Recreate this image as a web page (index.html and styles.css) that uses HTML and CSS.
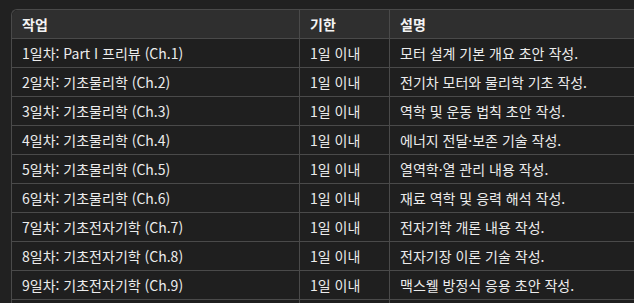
FILE: index.html
```html
<!DOCTYPE html>
<html lang="ko">
<head>
<meta charset="utf-8">
<link rel="stylesheet" href="styles.css">
</head>
<body>
<div class="wrap">
<table class="tbl">
<thead>
<tr><th class="c1">작업</th><th class="c2">기한</th><th class="c3">설명</th></tr>
</thead>
<tbody>
<tr><td>1일차: Part I 프리뷰 (Ch.1)</td><td>1일 이내</td><td>모터 설계 기본 개요 초안 작성.</td></tr>
<tr><td>2일차: 기초물리학 (Ch.2)</td><td>1일 이내</td><td>전기차 모터와 물리학 기초 작성.</td></tr>
<tr><td>3일차: 기초물리학 (Ch.3)</td><td>1일 이내</td><td>역학 및 운동 법칙 초안 작성.</td></tr>
<tr><td>4일차: 기초물리학 (Ch.4)</td><td>1일 이내</td><td>에너지 전달·보존 기술 작성.</td></tr>
<tr><td>5일차: 기초물리학 (Ch.5)</td><td>1일 이내</td><td>열역학·열 관리 내용 작성.</td></tr>
<tr><td>6일차: 기초물리학 (Ch.6)</td><td>1일 이내</td><td>재료 역학 및 응력 해석 작성.</td></tr>
<tr><td>7일차: 기초전자기학 (Ch.7)</td><td>1일 이내</td><td>전자기학 개론 내용 작성.</td></tr>
<tr><td>8일차: 기초전자기학 (Ch.8)</td><td>1일 이내</td><td>전자기장 이론 기술 작성.</td></tr>
<tr><td>9일차: 기초전자기학 (Ch.9)</td><td>1일 이내</td><td>맥스웰 방정식 응용 초안 작성.</td></tr>
<tr class="tail"><td></td><td></td><td></td></tr>
</tbody>
</table>
</div>
</body>
</html>
```
FILE: styles.css
```css
html, body {
  margin: 0;
  padding: 0;
  background: #212121;
  overflow: hidden;
}
body {
  width: 634px;
  height: 303px;
  font-family: "Noto Sans CJK KR", "Noto Sans", sans-serif;
  font-size: 14px;
  color: #ececec;
}
.wrap {
  padding: 9px 0 0 11px;
}
.tbl {
  border-collapse: separate;
  border-spacing: 0;
  width: 700px;
  table-layout: fixed;
  border-top: 1px solid #4a4a4a;
  border-left: 1px solid #4a4a4a;
  border-top-left-radius: 6px;
  overflow: hidden;
}
.tbl th, .tbl td {
  height: 28px;
  padding: 0 10px;
  text-align: left;
  white-space: nowrap;
  border-right: 1px solid #4a4a4a;
  border-bottom: 1px solid #4a4a4a;
  line-height: 28px;
}
.tbl th {
  background: #2f2f2f;
  font-weight: 700;
  color: #f4f4f4;
}
.tbl thead th:first-child { border-top-left-radius: 6px; }
.tbl td {
  background: #1f1f1f;
}
.c1 { width: 267px; }
.c2 { width: 69px; }
.c3 { width: auto; }
```
